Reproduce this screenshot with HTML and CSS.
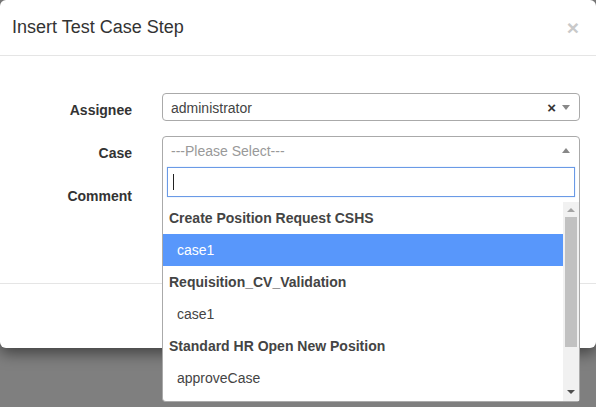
FILE: index.html
```html
<!DOCTYPE html>
<html>
<head>
<meta charset="utf-8">
<title>Insert Test Case Step</title>
<link rel="stylesheet" href="styles.css">
</head>
<body>
<div class="modal">
  <div class="modal-header">
    <h4 class="modal-title">Insert Test Case Step</h4>
    <span class="close">×</span>
  </div>
  <div class="modal-body">
    <div class="form-row">
      <label class="label">Assignee</label>
      <div class="field">
        <div class="select">
          <span class="select-text">administrator</span>
          <span class="clear">×</span>
          <span class="arrow arrow-down"></span>
        </div>
      </div>
    </div>
    <div class="form-row">
      <label class="label">Case</label>
      <div class="field">
        <div class="select select-open">
          <span class="select-text placeholder">---Please Select---</span>
          <span class="arrow arrow-up"></span>
        </div>
        <div class="dropdown">
          <div class="search">
            <div class="search-input"><span class="caret"></span></div>
          </div>
          <div class="results">
            <ul class="options">
              <li class="group">Create Position Request CSHS</li>
              <li class="option highlighted">case1</li>
              <li class="group">Requisition_CV_Validation</li>
              <li class="option">case1</li>
              <li class="group">Standard HR Open New Position</li>
              <li class="option">approveCase</li>
            </ul>
            <div class="scrollbar">
              <span class="sb-arrow sb-up"></span>
              <div class="sb-track"><div class="sb-thumb"></div></div>
              <span class="sb-arrow sb-down"></span>
            </div>
          </div>
        </div>
      </div>
    </div>
    <div class="form-row">
      <label class="label">Comment</label>
      <div class="field"></div>
    </div>
  </div>
  <div class="modal-footer"></div>
</div>
</body>
</html>
```

FILE: styles.css
```css
* { box-sizing: border-box; }
html {
  background: #7f7f7f;
}
body {
  margin: 0;
  padding: 0;
  height: 407px;
  overflow: hidden;
  font-family: "Liberation Sans", Arial, sans-serif;
  font-size: 14px;
  color: #333;
}
.modal {
  width: 596px;
  background: #fff;
  border-radius: 6px;
  box-shadow: 0 5px 15px rgba(0, 0, 0, 0.5);
}
.modal-header {
  display: flex;
  justify-content: space-between;
  align-items: flex-start;
  padding: 15px 15px 15px 12px;
  border-bottom: 1px solid #e5e5e5;
  height: 56px;
}
.modal-title {
  margin: 0;
  font-size: 18px;
  font-weight: normal;
  line-height: 25.7px;
  color: #333;
}
.close {
  font-size: 21px;
  font-weight: bold;
  line-height: 1;
  color: #c9c9c9;
  margin-top: 2px;
  margin-right: 2px;
}
.modal-body {
  height: 228px;
  padding: 37px 0 0 0;
  border-bottom: 1px solid #e5e5e5;
}
.form-row {
  display: flex;
  margin-bottom: 15px;
}
.label {
  width: 132px;
  text-align: right;
  font-weight: bold;
  padding-top: 7px;
  line-height: 20px;
}
.field {
  position: relative;
  margin-left: 30px;
  width: 418px;
  min-height: 28px;
}
.select {
  display: flex;
  align-items: center;
  height: 28px;
  border: 1px solid #aaa;
  border-radius: 4px;
  padding: 1px 8px 0 8px;
}
.select-open {
  border-bottom-left-radius: 0;
  border-bottom-right-radius: 0;
}
.select-text {
  flex: 1;
  line-height: 26px;
  color: #444;
}
.placeholder { color: #999; }
.clear {
  font-weight: bold;
  font-size: 15px;
  color: #333;
  margin-right: 6px;
  margin-top: -1px;
}
.arrow {
  width: 0;
  height: 0;
  border-left: 4px solid transparent;
  border-right: 4px solid transparent;
  margin-right: 1px;
}
.arrow-down { border-top: 5px solid #888; }
.arrow-up { border-bottom: 5px solid #888; }
.modal-footer {
  height: 64px;
}
.dropdown {
  position: absolute;
  top: 27px;
  left: 0;
  width: 418px;
  background: #fff;
  border: 1px solid #aaa;
  border-top: none;
  border-radius: 0 0 4px 4px;
  z-index: 5;
}
.search {
  padding: 4px 4px 5px;
}
.search-input {
  height: 30px;
  border: 1px solid #6a9ae6;
  box-shadow: 0 0 1px rgba(88, 151, 251, 0.5);
  padding: 6px 0 0 5px;
}
.caret {
  display: block;
  width: 1px;
  height: 16px;
  background: #222;
}
.results {
  display: flex;
  height: 199px;
  overflow: hidden;
}
.options {
  list-style: none;
  margin: 0;
  padding: 0;
  flex: 1;
}
.group {
  padding: 6px 6px;
  line-height: 20px;
  font-weight: bold;
  color: #444;
}
.option {
  padding: 6px 6px 6px 14px;
  line-height: 20px;
  color: #444;
}
.highlighted {
  background: #5897fb;
  color: #fff;
}
.scrollbar {
  width: 16px;
  background: #f1f1f1;
  display: flex;
  flex-direction: column;
  align-items: center;
}
.sb-arrow {
  width: 0;
  height: 0;
  border-left: 4px solid transparent;
  border-right: 4px solid transparent;
}
.sb-up {
  border-bottom: 4px solid #a3a3a3;
  margin: 6px 0 5px;
}
.sb-down {
  border-top: 4px solid #505050;
  margin: 6px 0 7px;
}
.sb-track {
  flex: 1;
  width: 100%;
  padding: 0 2px;
}
.sb-thumb {
  height: 130px;
  background: #c1c1c1;
}
```
